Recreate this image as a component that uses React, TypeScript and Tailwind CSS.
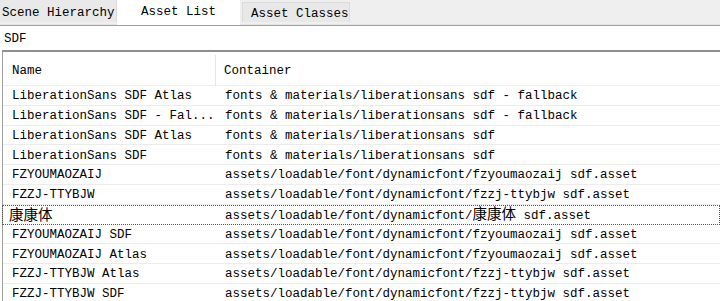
import React from "react";

const rows: [string, string][] = [
  ["LiberationSans SDF Atlas", "fonts & materials/liberationsans sdf - fallback"],
  ["LiberationSans SDF - Fal...", "fonts & materials/liberationsans sdf - fallback"],
  ["LiberationSans SDF Atlas", "fonts & materials/liberationsans sdf"],
  ["LiberationSans SDF", "fonts & materials/liberationsans sdf"],
  ["FZYOUMAOZAIJ", "assets/loadable/font/dynamicfont/fzyoumaozaij sdf.asset"],
  ["FZZJ-TTYBJW", "assets/loadable/font/dynamicfont/fzzj-ttybjw sdf.asset"],
  ["康康体", "assets/loadable/font/dynamicfont/康康体 sdf.asset"],
  ["FZYOUMAOZAIJ SDF", "assets/loadable/font/dynamicfont/fzyoumaozaij sdf.asset"],
  ["FZYOUMAOZAIJ Atlas", "assets/loadable/font/dynamicfont/fzyoumaozaij sdf.asset"],
  ["FZZJ-TTYBJW Atlas", "assets/loadable/font/dynamicfont/fzzj-ttybjw sdf.asset"],
  ["FZZJ-TTYBJW SDF", "assets/loadable/font/dynamicfont/fzzj-ttybjw sdf.asset"],
];

// CJK glyphs are full width (2 columns), so give them a bigger size
const Txt = ({ s }: { s: string }) => {
  const parts = s.split(/([\u4e00-\u9fff]+)/);
  return (
    <>
      {parts.map((p, i) =>
        /[\u4e00-\u9fff]/.test(p) ? (
          <span key={i} className="text-[14.5px] font-['Noto_Sans_CJK_SC',sans-serif]">
            {p}
          </span>
        ) : (
          <span key={i}>{p}</span>
        )
      )}
    </>
  );
};

export default function App() {
  return (
    <div className="w-[720px] h-[301px] overflow-hidden bg-white text-black text-[12.5px] leading-none font-['Liberation_Mono','Noto_Sans_CJK_SC',monospace]">
      {/* tabs */}
      <div className="h-[25px] flex bg-[#efefef] border-b border-[#e2e2e2]">
        <div className="w-[117px] h-[22px] pl-[2px] pt-[4px] flex items-center bg-[#e9e9e9] border-r border-[#dadada] whitespace-pre">
          Scene Hierarchy
        </div>
        <div className="w-[123px] h-[25px] -mb-px flex items-center justify-center pb-[1px] bg-white whitespace-pre">
          Asset List
        </div>
        <div className="ml-[2px] mt-[2px] w-[108px] h-[20px] pl-[8px] pt-[3px] flex items-center bg-[#e8e8e8] border border-b-0 border-[#dadada] whitespace-pre">
          Asset Classes
        </div>
      </div>

      {/* search box */}
      <div className="h-[25px] flex items-center pl-[4px] pt-[2px] border-t border-[#a0a0a0] whitespace-pre">
        SDF
      </div>

      {/* list */}
      <div className="border-t-2 border-[#8e8e8e] border-l border-l-[#a0a0a0] ml-[2px]">
        <div className="h-[34px] flex items-center pt-[3px] border-b border-[#eeeeee]">
          <div className="w-[213px] h-full flex items-center pl-[9px] pt-[2px] border-r border-[#e5e5e5]">
            Name
          </div>
          <div className="pl-[8px] pt-[2px]">Container</div>
        </div>
        {rows.map(([n, c], i) => (
          <div
            key={i}
            className={`h-[19.8px] flex items-center whitespace-pre ${
              i === 6
                ? "border border-dotted border-[#555] -ml-px"
                : "border-b border-[#ececec] pt-[2px]"
            }`}
          >
            <div className={`w-[213px] flex items-center ${i === 6 ? "pl-[6px]" : "pl-[9px]"}`}>
              <Txt s={n} />
            </div>
            <div className="pl-[9px]">
              <Txt s={c} />
            </div>
          </div>
        ))}
      </div>
    </div>
  );
}
